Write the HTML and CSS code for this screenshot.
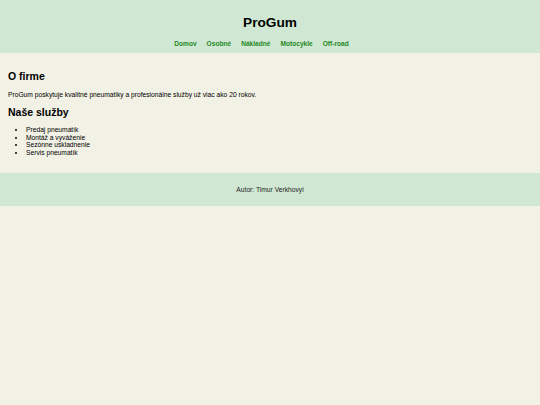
FILE: index.html
```html
<!DOCTYPE html>
<html lang="sk">
<head>
<meta charset="utf-8">
<title>ProGum</title>
<link rel="stylesheet" href="styles.css">
</head>
<body>
<header class="site-header">
  <h1 class="site-title">ProGum</h1>
  <nav class="site-nav">
    <a href="#">Domov</a>
    <a href="#">Osobné</a>
    <a href="#">Nákladné</a>
    <a href="#">Motocykle</a>
    <a href="#">Off-road</a>
  </nav>
</header>
<main class="content">
  <h2 class="section-title first">O firme</h2>
  <p class="text">ProGum poskytuje kvalitné pneumatiky a profesionálne služby už viac ako 20 rokov.</p>
  <h2 class="section-title">Naše služby</h2>
  <ul class="services">
    <li>Predaj pneumatík</li>
    <li>Montáž a vyváženie</li>
    <li>Sezónne uskladnenie</li>
    <li>Servis pneumatík</li>
  </ul>
</main>
<footer class="site-footer">Autor: Timur Verkhovyi</footer>
</body>
</html>
```
FILE: styles.css
```css
html, body {
  margin: 0;
  padding: 0;
}
body {
  background: #f2f1e5;
  font-family: "Liberation Sans", Arial, sans-serif;
  color: #000;
  min-height: 405px;
}
.site-header {
  background: #d0e8d3;
  text-align: center;
  padding: 14px 0 4px;
}
.site-title {
  margin: 0;
  font-size: 13.7px;
  line-height: 17px;
  font-weight: bold;
}
.site-nav {
  margin-top: 8px;
  display: flex;
  justify-content: center;
  gap: 10px;
  line-height: 10px;
  padding-right: 17px;
}
.site-nav a {
  font-size: 6.6px;
  font-weight: bold;
  color: #1f8a1f;
  text-decoration: none;
}
.content {
  padding: 0 8px 16px;
}
.section-title {
  margin: 6.5px 0 0;
  font-size: 10.5px;
  line-height: 14px;
  font-weight: bold;
}
.section-title.first {
  margin-top: 16px;
}
.text {
  margin: 6.5px 0 0;
  font-size: 6.7px;
  line-height: 9px;
}
.services {
  margin: 7px 0 0;
  padding-left: 18px;
  font-size: 6.7px;
  line-height: 7.7px;
}
.site-footer {
  background: #d0e8d3;
  text-align: center;
  font-size: 6.7px;
  color: #222;
  height: 33px;
  line-height: 33px;
}
```
